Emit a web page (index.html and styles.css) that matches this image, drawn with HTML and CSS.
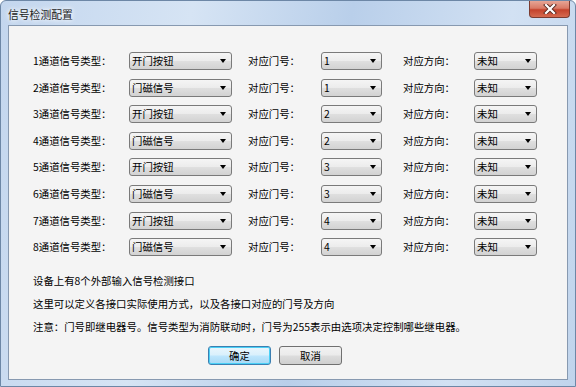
FILE: index.html
```html
<!DOCTYPE html>
<html>
	<head>
		<meta charset="utf-8" />
		<title>信号检测配置</title>
		<link rel="stylesheet" href="styles.css">
	</head>
	<body>
		<div class="window">
			<div class="titlebar">
				<span class="title">信号检测配置</span>
				<div class="close">
					<svg width="14" height="10" viewBox="0 0 14 10">
						<path d="M3 1 L11 9 M11 1 L3 9" stroke="#5a2a22" stroke-width="4" stroke-linecap="square" />
						<path d="M3 1 L11 9 M11 1 L3 9" stroke="#ffffff" stroke-width="2.2" stroke-linecap="square" />
					</svg>
				</div>
			</div>
			<div class="client">
				<!--通道配置-->
				<div class="grid">
					<span class="lbl">1通道信号类型：</span><div class="combo c1">开门按钮</div>
					<span class="lbl">对应门号：</span><div class="combo c2">1</div>
					<span class="lbl">对应方向：</span><div class="combo c3">未知</div>

					<span class="lbl">2通道信号类型：</span><div class="combo c1">门磁信号</div>
					<span class="lbl">对应门号：</span><div class="combo c2">1</div>
					<span class="lbl">对应方向：</span><div class="combo c3">未知</div>

					<span class="lbl">3通道信号类型：</span><div class="combo c1">开门按钮</div>
					<span class="lbl">对应门号：</span><div class="combo c2">2</div>
					<span class="lbl">对应方向：</span><div class="combo c3">未知</div>

					<span class="lbl">4通道信号类型：</span><div class="combo c1">门磁信号</div>
					<span class="lbl">对应门号：</span><div class="combo c2">2</div>
					<span class="lbl">对应方向：</span><div class="combo c3">未知</div>

					<span class="lbl">5通道信号类型：</span><div class="combo c1">开门按钮</div>
					<span class="lbl">对应门号：</span><div class="combo c2">3</div>
					<span class="lbl">对应方向：</span><div class="combo c3">未知</div>

					<span class="lbl">6通道信号类型：</span><div class="combo c1">门磁信号</div>
					<span class="lbl">对应门号：</span><div class="combo c2">3</div>
					<span class="lbl">对应方向：</span><div class="combo c3">未知</div>

					<span class="lbl">7通道信号类型：</span><div class="combo c1">开门按钮</div>
					<span class="lbl">对应门号：</span><div class="combo c2">4</div>
					<span class="lbl">对应方向：</span><div class="combo c3">未知</div>

					<span class="lbl">8通道信号类型：</span><div class="combo c1">门磁信号</div>
					<span class="lbl">对应门号：</span><div class="combo c2">4</div>
					<span class="lbl">对应方向：</span><div class="combo c3">未知</div>
				</div>
				<!--说明-->
				<div class="notes">
					<p>设备上有8个外部输入信号检测接口</p>
					<p>这里可以定义各接口实际使用方式，以及各接口对应的门号及方向</p>
					<p>注意：门号即继电器号。信号类型为消防联动时，门号为255表示由选项决定控制哪些继电器。</p>
				</div>
				<div class="buttons">
					<div class="btn default">确定</div>
					<div class="btn">取消</div>
				</div>
			</div>
		</div>
	</body>
</html>
```

FILE: styles.css
```css
*{
	margin: 0;
	padding: 0;
	box-sizing: border-box;
}
body {
	font-family: "Noto Sans CJK SC", "Liberation Sans", sans-serif;
	font-size: 10.4px;
	color: #000;
	background: #fff;
}
.window {
	width: 576px;
	height: 387px;
	padding: 0 7px 6px 7px;
	border: 1px solid #6d87a6;
	border-radius: 6px 6px 0 0;
	background: linear-gradient(100deg, #c3d6ee 0%, #d6e4f4 30%, #b9cfea 55%, #d2e1f3 80%, #c0d4ec 100%);
	display: flex;
	flex-direction: column;
}
.titlebar {
	height: 24px;
	display: flex;
	align-items: flex-start;
}
.title {
	margin-top: 5px;
	font-size: 10.8px;
	color: #1b1b1b;
	text-shadow: 0 0 4px #fff, 0 0 6px #fff;
}
.close {
	margin-left: auto;
	margin-right: -2px;
	width: 41px;
	height: 17px;
	border: 1px solid #7b3b30;
	border-top: 0;
	border-radius: 0 0 4px 4px;
	background: linear-gradient(#e6a595 0%, #d97a66 45%, #c4432c 55%, #d56a50 100%);
	display: flex;
	align-items: center;
	justify-content: center;
}
/*客户区*/
.client {
	flex: 1;
	border: 1px solid #8799b0;
	background: #f4f4f4;
	padding: 26px 0 0 24px;
}
.grid {
	display: grid;
	grid-template-columns: 96px 119px 73px 82px 71px 63px;
	grid-auto-rows: 18px;
	row-gap: 8.6px;
	align-items: center;
}
.lbl {
	white-space: nowrap;
	line-height: 18px;
}
.combo {
	height: 18px;
	line-height: 16px;
	padding-left: 2px;
	border: 1px solid #7a7a7a;
	border-radius: 3px;
	background: linear-gradient(#f5f5f5 0%, #ececec 48%, #dfdfdf 52%, #d2d2d2 100%);
	position: relative;
}
.combo::after {
	content: "";
	position: absolute;
	right: 5px;
	top: 6px;
	border-left: 3.5px solid transparent;
	border-right: 3.5px solid transparent;
	border-top: 4px solid #000;
}
.c1 {
	width: 103px;
}
.c2 {
	width: 61px;
}
.c3 {
	width: 63px;
}
/*说明*/
.notes {
	margin-top: 13px;
}
.notes p {
	line-height: 23px;
	white-space: nowrap;
}
.buttons {
	display: flex;
	gap: 8px;
	margin: 8px 0 0 175px;
}
.btn {
	width: 63px;
	height: 19px;
	line-height: 17px;
	text-align: center;
	border: 1px solid #707070;
	border-radius: 3px;
	background: linear-gradient(#f2f2f2 0%, #ebebeb 48%, #dddddd 52%, #cfcfcf 100%);
}
.btn.default {
	border-color: #3c7fb1;
	box-shadow: inset 0 0 0 1px #4ad0f6;
	background: linear-gradient(#eaf6fd 0%, #d9f0fc 48%, #bee6fd 52%, #a7d9f5 100%);
}
```
